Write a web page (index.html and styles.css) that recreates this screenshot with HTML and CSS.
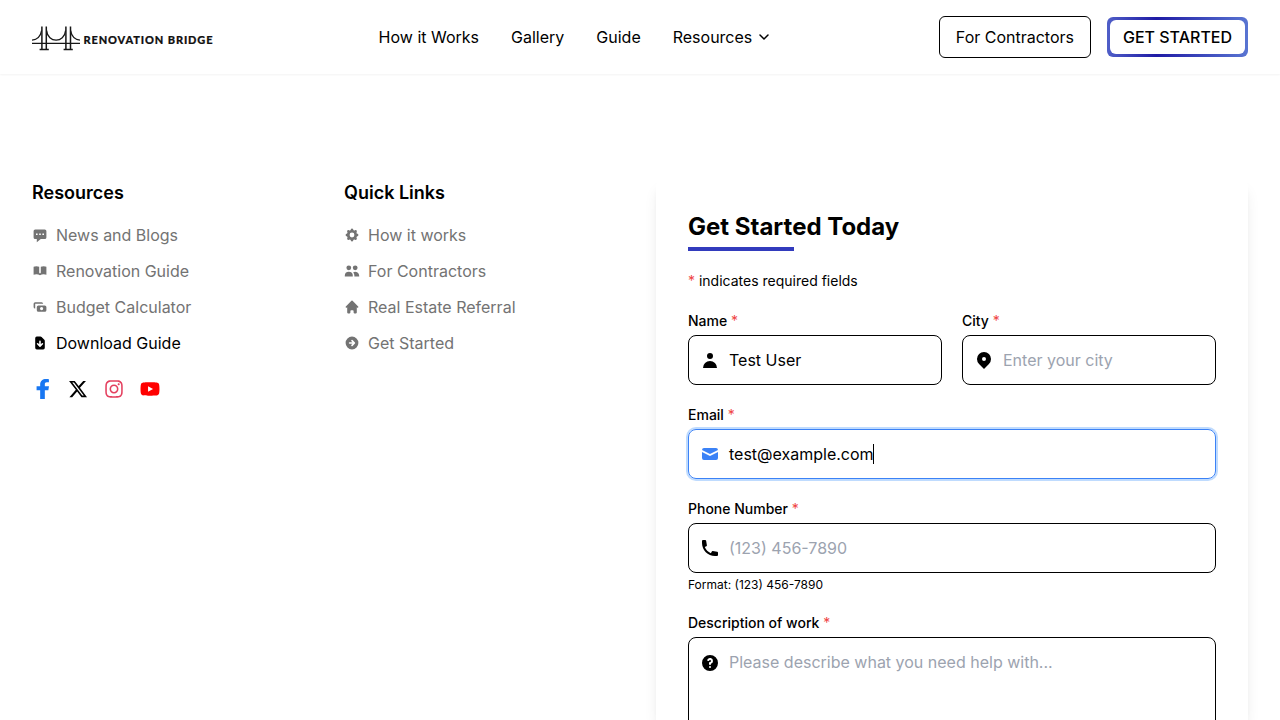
FILE: index.html
```html
<!DOCTYPE html>
<html lang="en">
<head>
<meta charset="utf-8">
<title>Renovation Bridge</title>
<link rel="stylesheet" href="styles.css">
</head>
<body>
<header class="header">
  <a class="brand" aria-label="Renovation Bridge">
    <svg width="181" height="26" viewBox="0 0 181 26">
      <g fill="none" stroke="#171717" stroke-width="1.3">
        <path d="M0 18.3H48M0 15.2C5 14.6 8.6 11.5 9.6 5.5M14.6 5.5C15.8 18.4 32.4 18.4 33.6 5.5M38.6 5.5C39.6 11.5 43 14.6 48 15.2"/>
        <path stroke-width="1.5" d="M9.9 1.5V24M14.3 1.5V24M33.9 1.5V24M38.5 1.5V24M7.6 24.5H16.800M31.6 24.5H40.800"/>
      </g>
      <text class="brand-name" x="51.5" y="19" textLength="129">RENOVATION BRIDGE</text>
    </svg>
  </a>
  <nav class="nav">
    <a>How it Works</a><a>Gallery</a><a>Guide</a>
    <a class="nav-menu">Resources <svg width="16" height="16" viewBox="0 0 16 16" fill="none" stroke="currentColor" stroke-width="1.5"><path stroke-linecap="round" stroke-linejoin="round" d="M4 6l4 4 4-4"/></svg></a>
  </nav>
  <div class="actions">
    <a class="button">For Contractors</a>
    <a class="button-primary"><span class="button-face">GET STARTED</span></a>
  </div>
</header>
<main class="content">
  <section class="column">
    <h3 class="column-title">Resources</h3>
    <ul class="links">
      <li><svg class="icon" viewBox="0 0 20 20"><path d="M18 5v8a2 2 0 01-2 2h-5l-5 4v-4H4a2 2 0 01-2-2V5a2 2 0 012-2h12a2 2 0 012 2zM7 8H5v2h2V8zm2 0h2v2H9V8zm6 0h-2v2h2V8z"/></svg>News and Blogs</li>
      <li><svg class="icon" viewBox="0 0 20 20"><path d="M9 4.804A7.968 7.968 0 005.5 4c-1.255 0-2.443.29-3.5.804v10A7.969 7.969 0 015.5 14c1.669 0 3.218.51 4.5 1.385A7.962 7.962 0 0114.5 14c1.255 0 2.443.29 3.5.804v-10A7.968 7.968 0 0014.5 4c-1.255 0-2.443.29-3.5.804V12a1 1 0 11-2 0V4.804z"/></svg>Renovation Guide</li>
      <li><svg class="icon" viewBox="0 0 20 20"><path d="M4 4a2 2 0 00-2 2v4a2 2 0 002 2V6h10a2 2 0 00-2-2H4zm2 6a2 2 0 012-2h8a2 2 0 012 2v4a2 2 0 01-2 2H8a2 2 0 01-2-2v-4zm6 4a2 2 0 100-4 2 2 0 000 4z"/></svg>Budget Calculator</li>
      <li class="current"><svg class="icon" viewBox="0 0 20 20"><path d="M6 2a2 2 0 00-2 2v12a2 2 0 002 2h8a2 2 0 002-2V7.414A2 2 0 0015.414 6L12 2.586A2 2 0 0010.586 2H6zm5 6a1 1 0 10-2 0v3.586l-1.293-1.293a1 1 0 10-1.414 1.414l3 3a1 1 0 001.414 0l3-3a1 1 0 00-1.414-1.414L11 11.586V8z"/></svg>Download Guide</li>
    </ul>
    <div class="social">
      <svg width="20" height="20" viewBox="0 0 24 24" fill="#1877f2"><path d="M15.4 24V13.5h4.2l.8-4.900h-5V6.200c0-1.400.7-2.300 2.400-2.300h2.500V.2C19.600.1 18.300 0 16.900 0 12.700 0 9.800 2.400 9.800 6.600v2H5.500v4.900h4.300V24z"/></svg>
      <svg width="20" height="20" viewBox="0 0 512 512"><path d="M389.2 48h70.6L305.6 224.2 487 464H345L233.7 318.6 106.5 464H35.8L200.7 275.5 26.8 48H172.4L272.9 180.9 389.2 48zM364.4 421.8h39.1L151.1 88h-42L364.4 421.8z"/></svg>
      <svg width="20" height="20" viewBox="0 0 448 512" fill="#e4405f"><path d="M224.1 141c-63.6 0-114.9 51.3-114.9 114.9s51.3 114.9 114.9 114.9S339 319.5 339 255.900 287.700 141 224.100 141zm0 189.600c-41.100 0-74.700-33.500-74.700-74.700s33.500-74.700 74.700-74.700 74.700 33.500 74.700 74.700-33.600 74.700-74.700 74.700zm146.400-194.300c0 14.900-12 26.800-26.800 26.800-14.900 0-26.800-12-26.800-26.800s12-26.800 26.800-26.800 26.800 12 26.800 26.800zm76.100 27.200c-1.700-35.900-9.900-67.700-36.200-93.900-26.200-26.200-58-34.400-93.900-36.200-37-2.100-147.900-2.100-184.900 0-35.800 1.700-67.600 9.900-93.900 36.100s-34.400 58-36.200 93.900c-2.100 37-2.100 147.900 0 184.900 1.700 35.900 9.900 67.700 36.200 93.900s58 34.400 93.900 36.200c37 2.100 147.900 2.100 184.900 0 35.900-1.700 67.700-9.900 93.900-36.200 26.200-26.200 34.400-58 36.200-93.900 2.100-37 2.100-147.800 0-184.800zM398.800 388c-7.800 19.600-22.900 34.700-42.600 42.600-29.500 11.700-99.500 9-132.100 9s-102.700 2.600-132.100-9c-19.600-7.800-34.700-22.900-42.600-42.600-11.700-29.500-9-99.500-9-132.100s-2.600-102.700 9-132.100c7.800-19.600 22.900-34.700 42.600-42.600 29.500-11.700 99.500-9 132.100-9s102.700-2.600 132.100 9c19.600 7.800 34.700 22.900 42.600 42.600 11.700 29.500 9 99.500 9 132.100s2.700 102.700-9 132.100z"/></svg>
      <svg width="20" height="20" viewBox="0 0 576 512" fill="#f00"><path d="M549.655 124.083c-6.281-23.650-24.787-42.276-48.284-48.597C458.781 64 288 64 288 64S117.220 64 74.629 75.486c-23.497 6.322-42.003 24.947-48.284 48.597-11.412 42.867-11.412 132.305-11.412 132.305s0 89.438 11.412 132.305c6.281 23.650 24.787 41.500 48.284 47.821C117.220 448 288 448 288 448s170.780 0 213.371-11.486c23.497-6.321 42.003-24.171 48.284-47.821 11.412-42.867 11.412-132.305 11.412-132.305s0-89.438-11.412-132.305zm-317.510 213.508V175.185l142.739 81.205-142.739 81.201z"/></svg>
    </div>
  </section>
  <section class="column">
    <h3 class="column-title">Quick Links</h3>
    <ul class="links">
      <li><svg class="icon" viewBox="0 0 20 20"><path d="M11.49 3.17c-.38-1.56-2.6-1.56-2.98 0a1.532 1.532 0 01-2.286.948c-1.372-.836-2.942.734-2.106 2.106.54.886.061 2.042-.947 2.287-1.561.379-1.561 2.6 0 2.978a1.532 1.532 0 01.947 2.287c-.836 1.372.734 2.942 2.106 2.106a1.532 1.532 0 012.287.947c.379 1.561 2.6 1.561 2.978 0a1.533 1.533 0 012.287-.947c1.372.836 2.942-.734 2.106-2.106a1.533 1.533 0 01.947-2.287c1.561-.379 1.561-2.6 0-2.978a1.532 1.532 0 01-.947-2.287c.836-1.372-.734-2.942-2.106-2.106a1.532 1.532 0 01-2.287-.947zM10 13a3 3 0 100-6 3 3 0 000 6z"/></svg>How it works</li>
      <li><svg class="icon" viewBox="0 0 20 20"><path d="M9 6a3 3 0 11-6 0 3 3 0 016 0zM17 6a3 3 0 11-6 0 3 3 0 016 0zM12.93 17c.046-.327.07-.66.07-1a6.97 6.97 0 00-1.5-4.33A5 5 0 0119 16v1h-6.07zM6 11a5 5 0 015 5v1H1v-1a5 5 0 015-5z"/></svg>For Contractors</li>
      <li><svg class="icon" viewBox="0 0 20 20"><path d="M10.707 2.293a1 1 0 00-1.414 0l-7 7a1 1 0 001.414 1.414L4 10.414V17a1 1 0 001 1h2a1 1 0 001-1v-2a1 1 0 011-1h2a1 1 0 011 1v2a1 1 0 001 1h2a1 1 0 001-1v-6.586l.293.293a1 1 0 001.414-1.414l-7-7z"/></svg>Real Estate Referral</li>
      <li><svg class="icon" viewBox="0 0 20 20"><path d="M10 18a8 8 0 100-16 8 8 0 000 16zm3.707-8.707l-3-3a1 1 0 00-1.414 1.414L10.586 9H7a1 1 0 100 2h3.586l-1.293 1.293a1 1 0 101.414 1.414l3-3a1 1 0 000-1.414z"/></svg>Get Started</li>
    </ul>
  </section>
  <form class="card">
    <h2 class="card-title">Get Started Today</h2>
    <p class="required-note"><span class="star">*</span> indicates required fields</p>
    <div class="row">
      <div class="field">
        <label class="label">Name <span class="star">*</span></label>
        <div class="control"><svg class="field-icon" viewBox="0 0 20 20"><path d="M10 9a3 3 0 100-6 3 3 0 000 6zm-7 9a7 7 0 1114 0H3z"/></svg><input class="input" value="Test User"></div>
      </div>
      <div class="field">
        <label class="label">City <span class="star">*</span></label>
        <div class="control"><svg class="field-icon" viewBox="0 0 20 20"><path d="M5.05 4.05a7 7 0 119.9 9.9L10 18.9l-4.95-4.95a7 7 0 010-9.9zM10 11a2 2 0 100-4 2 2 0 000 4z"/></svg><input class="input" placeholder="Enter your city"></div>
      </div>
    </div>
    <div class="field">
      <label class="label">Email <span class="star">*</span></label>
      <div class="control focused"><svg class="field-icon" viewBox="0 0 20 20"><path d="M2.003 5.884L10 9.882l7.997-3.998A2 2 0 0016 4H4a2 2 0 00-1.997 1.884z"/><path d="M18 8.118l-8 4-8-4V14a2 2 0 002 2h12a2 2 0 002-2V8.118z"/></svg><span>test@example.com</span><span class="caret"></span></div>
    </div>
    <div class="field">
      <label class="label">Phone Number <span class="star">*</span></label>
      <div class="control"><svg class="field-icon" viewBox="0 0 20 20"><path d="M2 3a1 1 0 011-1h2.153a1 1 0 01.986.836l.74 4.435a1 1 0 01-.54 1.06l-1.548.773a11.037 11.037 0 006.105 6.105l.774-1.548a1 1 0 011.059-.54l4.435.74a1 1 0 01.836.986V17a1 1 0 01-1 1h-2C7.82 18 2 12.18 2 5V3z"/></svg><input class="input" placeholder="(123) 456-7890"></div>
      <p class="hint">Format: (123) 456-7890</p>
    </div>
    <div class="field">
      <label class="label">Description of work <span class="star">*</span></label>
      <div class="control tall"><svg class="field-icon" viewBox="0 0 20 20"><path d="M18 10a8 8 0 11-16 0 8 8 0 0116 0zm-8-3a1 1 0 00-.867.5 1 1 0 11-1.731-1A3 3 0 0113 8a3.001 3.001 0 01-2 2.83V11a1 1 0 11-2 0v-1a1 1 0 011-1 1 1 0 100-2zm0 8a1 1 0 100-2 1 1 0 000 2z"/></svg><textarea class="input" placeholder="Please describe what you need help with..."></textarea></div>
    </div>
  </form>
</main>
</body>
</html>
```
FILE: styles.css
```css
* { box-sizing: border-box; margin: 0; padding: 0; }
body { display: flex; flex-direction: column; font: 16px/24px Inter, sans-serif; color: #000; background: #fff; height: 720px; overflow: hidden; }
svg { display: block; flex: none; }
.header { display: grid; flex: none; grid-template-columns: 346.6px 1fr auto; align-items: center; height: 74px; padding: 0 32px; box-shadow: 0 1px 2px rgba(0, 0, 0, .05); }
.brand { padding-top: 2px; }
.brand-name { font: 900 11px Lato, sans-serif; fill: #111; stroke: #111; stroke-width: .2px; }
.nav { display: flex; gap: 32px; }
.nav-menu { display: flex; align-items: center; gap: 4px; }
.actions { display: flex; align-items: center; gap: 16px; }
.button { border: 1px solid #000; border-radius: 6px; padding: 8px 16px; }
.button-primary { padding: 3px; border-radius: 6px; width: 141px; height: 40px; background: linear-gradient(90deg, #505fc8 0%, #1f1ba5 35%, #5975d2 100%); }
.button-face { display: block; border-radius: 6px; line-height: 34px; text-align: center; font-weight: 500; background: #fff; }
.content { display: grid; flex: 1; min-height: 0; grid-template-columns: 280px 280px 592px; grid-template-rows: 100%; column-gap: 32px; padding: 105px 32px 0; }
.column-title { font-size: 18px; line-height: 28px; font-weight: 600; margin-bottom: 16px; }
.links { list-style: none; display: grid; gap: 12px; }
.links li { display: flex; align-items: center; gap: 8px; color: #737373; }
.links .current { color: #000; }
.icon { width: 16px; height: 16px; fill: currentColor; fill-rule: evenodd; }
.social { display: flex; gap: 16px; margin-top: 24px; }
.card { padding: 32px 32px 0; border-radius: 8px 8px 0 0; background: #fff; box-shadow: 0 10px 15px -3px rgba(0, 0, 0, .1), 0 4px 6px -4px rgba(0, 0, 0, .1); }
.card-title { width: max-content; font-size: 24px; line-height: 32px; font-weight: 700; padding-bottom: 8px; background: linear-gradient(#323bbd, #323bbd) left bottom / 106px 4px no-repeat; }
.required-note { font-size: 14px; line-height: 20px; margin: 20px 0; }
.star { color: #ef4444; }
.row { display: grid; grid-template-columns: minmax(0, 1fr) minmax(0, 1fr); gap: 20px; }
.field { margin-bottom: 20px; }
.label { display: block; font-size: 14px; line-height: 20px; font-weight: 500; margin-bottom: 4px; }
.label .star { font-weight: 400; }
.control { display: flex; align-items: center; height: 50px; border: 1px solid #000; border-radius: 8px; padding: 0 11px; }
.field-icon { width: 20px; height: 20px; margin-right: 9px; fill: currentColor; fill-rule: evenodd; }
.input { flex: 1; width: 0; min-width: 0; border: 0; outline: 0; background: none; font: inherit; color: #000; resize: none; }
.input::placeholder { color: #9ca3af; }
.focused { border-color: #3b82f6; box-shadow: 0 0 0 2px #bfdbfe; }
.focused .field-icon { fill: #3b82f6; }
.caret { width: 1px; height: 20px; margin-left: -1px; background: #000; }
.hint { font-size: 12px; line-height: 16px; margin-top: 4px; }
.tall { height: 122px; align-items: flex-start; padding-top: 12px; }
.tall .field-icon { margin-top: 3px; }
.tall .input { height: 96px; }
```
